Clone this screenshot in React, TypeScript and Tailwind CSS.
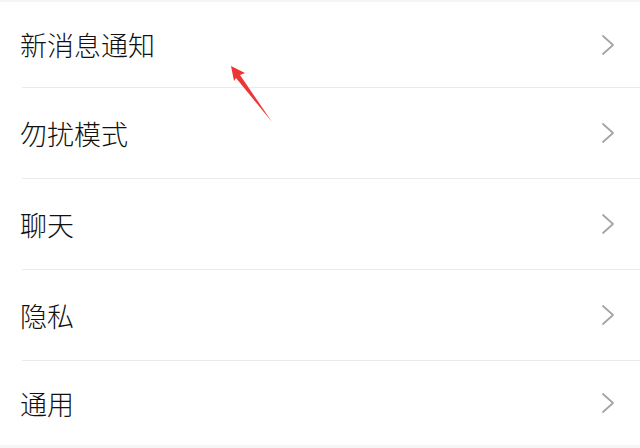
import React from "react";

const items = ["新消息通知", "勿扰模式", "聊天", "隐私", "通用"];

function Chevron() {
  return (
    <svg width="14" height="22" viewBox="0 0 14 22" className="shrink-0">
      <polyline points="2,2 12,11 2,20" fill="none" stroke="#a3a3a3" strokeWidth="1.7" strokeLinecap="round" strokeLinejoin="round" />
    </svg>
  );
}

export default function App() {
  const heights = ["h-[85px]", "h-[90px]", "h-[90px]", "h-[90px]", "h-[84px]"];
  return (
    <div className="relative w-[640px] h-[448px] overflow-hidden bg-white" style={{ fontFamily: '"Noto Sans CJK SC", "Noto Sans", sans-serif' }}>
      <div className="h-[2px] bg-[#f5f5f5]" />
      {items.map((t, i) => (
        <div key={t}>
          <div className={`flex items-center justify-between pl-[20px] pr-[25px] ${heights[i]}`}>
            <span className="text-[27px] leading-none font-light text-[#111111]">{t}</span>
            <Chevron />
          </div>
          {i < items.length - 1 && <div className="ml-[22px] h-[1px] bg-[#ebebeb]" />}
        </div>
      ))}
      <div className="h-[10px] bg-[#f6f6f6]" />
      <svg className="absolute left-0 top-0" width="640" height="448" viewBox="0 0 640 448">
        <polygon points="231,66 245,73 240,75 272,122 236,78 234,81" fill="#ee3535" />
      </svg>
    </div>
  );
}
